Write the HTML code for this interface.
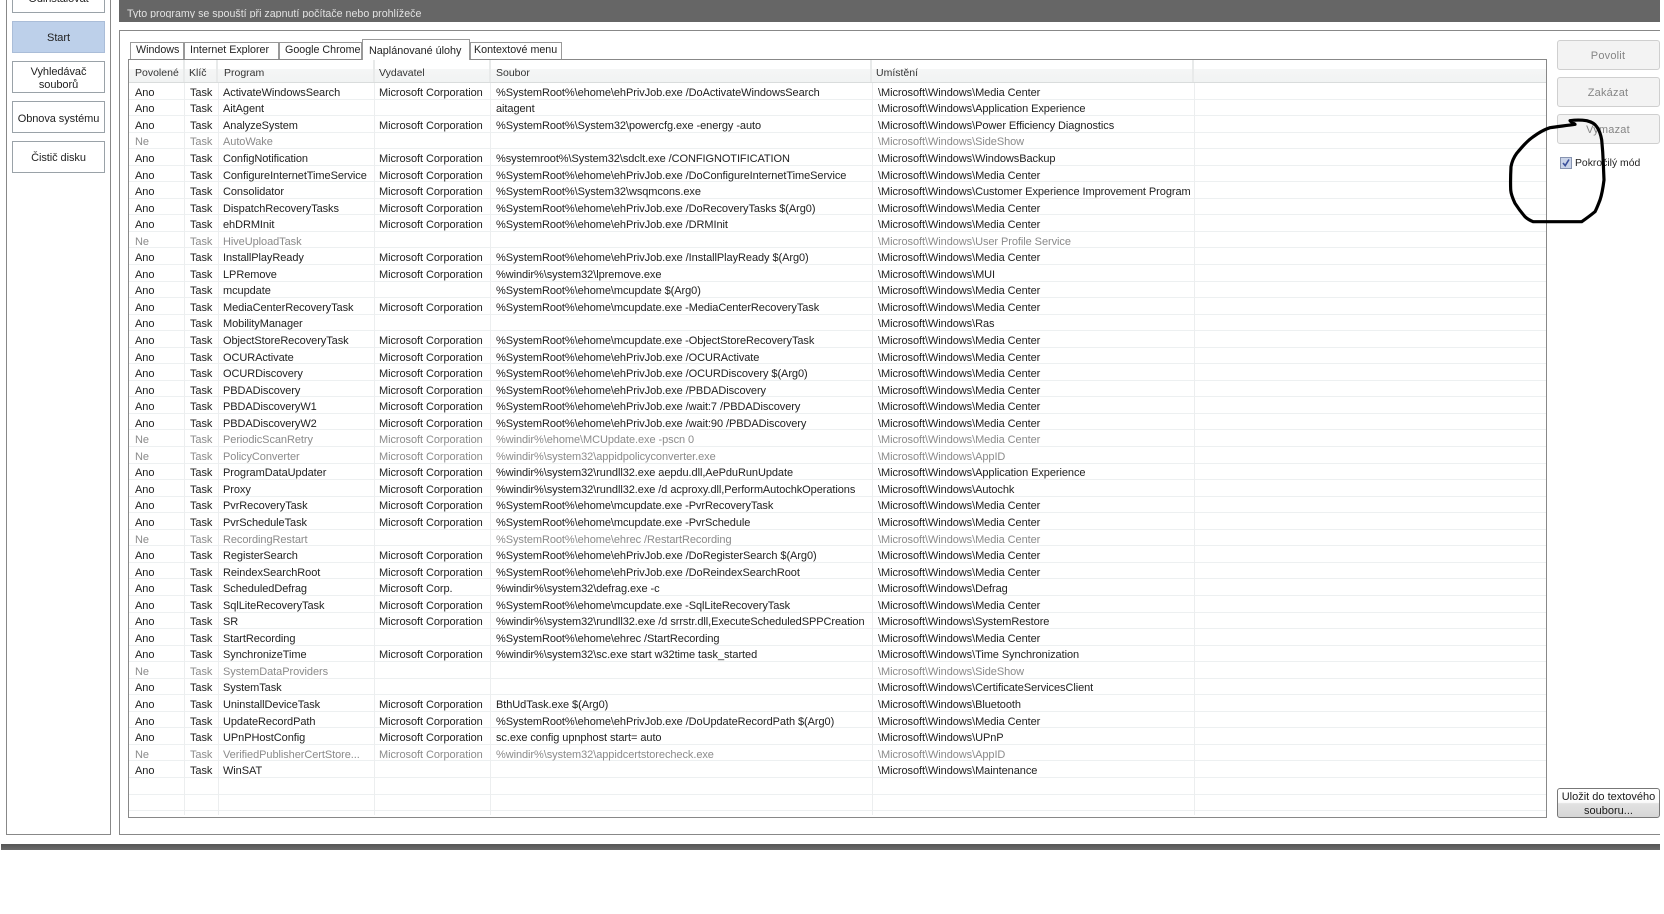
<!DOCTYPE html>
<html lang="cs"><head><meta charset="utf-8"><title>Start</title>
<style>
html,body{margin:0;padding:0;background:#fff;width:1664px;height:914px;overflow:hidden}
body{position:relative;font-family:"Liberation Sans",sans-serif;font-size:11px;letter-spacing:-.07px;color:#222}
.abs,.btn,.tab,.side,.line{position:absolute;box-sizing:border-box}
.side{left:12px;width:93px;border:1px solid #9aa2a8;background:#fff;text-align:center;display:flex;align-items:center;justify-content:center;line-height:13.5px;padding-top:4px}
.tab{top:42px;height:18px;border:1px solid #999;border-bottom:0;background:#fff;padding-left:5px;white-space:nowrap}
.tab div{height:12px;overflow:hidden;line-height:15px;font-size:10.7px;letter-spacing:0}
.tab.on{top:39px;height:21px;padding-left:6px;z-index:3}
.tab.on div{height:17px;overflow:visible;line-height:22px;font-size:10.8px}
.rows{position:absolute;left:129px;top:83px;width:1417px;height:733px;overflow:hidden;z-index:1}
.r{position:relative;height:16.56px;box-shadow:inset 0 -1px #edf0f1;line-height:16.2px;white-space:nowrap}
.r span{position:absolute;top:1.8px}
.r span:nth-child(1){left:6px}
.r span:nth-child(2){left:61px}
.r span:nth-child(3){left:94px}
.r span:nth-child(4){left:250px}
.r span:nth-child(5){left:367px}
.r span:nth-child(6){left:749px}
.n{color:#8b8b8b}
.col{position:absolute;top:83px;height:732px;width:1px;background:#eceeef;z-index:2}
.hs{position:absolute;top:60px;height:22px;width:2px;background:#e8eaea;z-index:2}
.h{position:absolute;top:66px;line-height:15px;z-index:3;color:#333;font-size:10.5px;letter-spacing:0}
.btn{left:1557px;width:103px;height:30px;border:1px solid #cfcfcf;border-radius:3px;background:#f3f3f3;color:#858585;text-align:center;line-height:30px;letter-spacing:.2px;padding-right:1px}
</style></head><body>

<div class="abs" style="left:6px;top:-5px;width:105px;height:840px;border:1px solid #888"></div>
<div class="side" style="top:-20px;height:33px;align-items:flex-end;padding-bottom:6px;padding-top:0">Odinstalovat</div>
<div class="side" style="top:21px;height:32px;background:#bdd0ea;border-color:#aabdd8">Start</div>
<div class="side" style="top:61px;height:32px">Vyhledávač<br>souborů</div>
<div class="side" style="top:101px;height:32px;padding-top:5px">Obnova systému</div>
<div class="side" style="top:141px;height:32px">Čistič disku</div>

<div class="abs" style="left:119px;top:0;width:1541px;height:22px;background:#666"></div>
<div class="abs" style="left:127px;top:7px;height:11px;overflow:hidden;color:#e2e2e2;line-height:14px;white-space:nowrap;font-size:10.66px;letter-spacing:0">Tyto programy se spouští při zapnutí počítače nebo prohlížeče</div>

<div class="abs" style="left:119px;top:30px;width:1541px;height:805px;border:1px solid #888;border-right:0"></div>

<div class="tab" style="left:130px;width:54px"><div>Windows</div></div>
<div class="tab" style="left:184px;width:95px"><div>Internet Explorer</div></div>
<div class="tab" style="left:279px;width:83px"><div>Google Chrome</div></div>
<div class="tab on" style="left:362px;width:108px"><div>Naplánované úlohy</div></div>
<div class="tab" style="left:470px;width:92px;padding-left:3px"><div>Kontextové menu</div></div>

<div class="abs" style="left:128px;top:59px;width:1419px;height:759px;border:1px solid #888;background:#fff"></div>
<div class="abs" style="left:129px;top:69px;width:1417px;height:14px;background:linear-gradient(#f5f6f6,#f1f3f3);border-bottom:1px solid #d9dcdc;box-sizing:border-box"></div>

<div class="hs" style="left:183px"></div><div class="hs" style="left:216px"></div><div class="hs" style="left:373px"></div><div class="hs" style="left:489px"></div><div class="hs" style="left:870px"></div><div class="hs" style="left:1192px"></div>
<div class="h" style="left:135px">Povolené</div>
<div class="h" style="left:189px">Klíč</div>
<div class="h" style="left:224px">Program</div>
<div class="h" style="left:379px">Vydavatel</div>
<div class="h" style="left:496px">Soubor</div>
<div class="h" style="left:876px">Umístění</div>

<div class="col" style="left:184px"></div><div class="col" style="left:218px"></div><div class="col" style="left:374px"></div><div class="col" style="left:490px"></div><div class="col" style="left:872px"></div><div class="col" style="left:1194px"></div>

<div class="rows">
<div class="r"><span>Ano</span><span>Task</span><span>ActivateWindowsSearch</span><span>Microsoft Corporation</span><span>%SystemRoot%\ehome\ehPrivJob.exe /DoActivateWindowsSearch</span><span>\Microsoft\Windows\Media Center</span></div>
<div class="r"><span>Ano</span><span>Task</span><span>AitAgent</span><span></span><span>aitagent</span><span>\Microsoft\Windows\Application Experience</span></div>
<div class="r"><span>Ano</span><span>Task</span><span>AnalyzeSystem</span><span>Microsoft Corporation</span><span>%SystemRoot%\System32\powercfg.exe -energy -auto</span><span>\Microsoft\Windows\Power Efficiency Diagnostics</span></div>
<div class="r n"><span>Ne</span><span>Task</span><span>AutoWake</span><span></span><span></span><span>\Microsoft\Windows\SideShow</span></div>
<div class="r"><span>Ano</span><span>Task</span><span>ConfigNotification</span><span>Microsoft Corporation</span><span>%systemroot%\System32\sdclt.exe /CONFIGNOTIFICATION</span><span>\Microsoft\Windows\WindowsBackup</span></div>
<div class="r"><span>Ano</span><span>Task</span><span>ConfigureInternetTimeService</span><span>Microsoft Corporation</span><span>%SystemRoot%\ehome\ehPrivJob.exe /DoConfigureInternetTimeService</span><span>\Microsoft\Windows\Media Center</span></div>
<div class="r"><span>Ano</span><span>Task</span><span>Consolidator</span><span>Microsoft Corporation</span><span>%SystemRoot%\System32\wsqmcons.exe</span><span>\Microsoft\Windows\Customer Experience Improvement Program</span></div>
<div class="r"><span>Ano</span><span>Task</span><span>DispatchRecoveryTasks</span><span>Microsoft Corporation</span><span>%SystemRoot%\ehome\ehPrivJob.exe /DoRecoveryTasks $(Arg0)</span><span>\Microsoft\Windows\Media Center</span></div>
<div class="r"><span>Ano</span><span>Task</span><span>ehDRMInit</span><span>Microsoft Corporation</span><span>%SystemRoot%\ehome\ehPrivJob.exe /DRMInit</span><span>\Microsoft\Windows\Media Center</span></div>
<div class="r n"><span>Ne</span><span>Task</span><span>HiveUploadTask</span><span></span><span></span><span>\Microsoft\Windows\User Profile Service</span></div>
<div class="r"><span>Ano</span><span>Task</span><span>InstallPlayReady</span><span>Microsoft Corporation</span><span>%SystemRoot%\ehome\ehPrivJob.exe /InstallPlayReady $(Arg0)</span><span>\Microsoft\Windows\Media Center</span></div>
<div class="r"><span>Ano</span><span>Task</span><span>LPRemove</span><span>Microsoft Corporation</span><span>%windir%\system32\lpremove.exe</span><span>\Microsoft\Windows\MUI</span></div>
<div class="r"><span>Ano</span><span>Task</span><span>mcupdate</span><span></span><span>%SystemRoot%\ehome\mcupdate $(Arg0)</span><span>\Microsoft\Windows\Media Center</span></div>
<div class="r"><span>Ano</span><span>Task</span><span>MediaCenterRecoveryTask</span><span>Microsoft Corporation</span><span>%SystemRoot%\ehome\mcupdate.exe -MediaCenterRecoveryTask</span><span>\Microsoft\Windows\Media Center</span></div>
<div class="r"><span>Ano</span><span>Task</span><span>MobilityManager</span><span></span><span></span><span>\Microsoft\Windows\Ras</span></div>
<div class="r"><span>Ano</span><span>Task</span><span>ObjectStoreRecoveryTask</span><span>Microsoft Corporation</span><span>%SystemRoot%\ehome\mcupdate.exe -ObjectStoreRecoveryTask</span><span>\Microsoft\Windows\Media Center</span></div>
<div class="r"><span>Ano</span><span>Task</span><span>OCURActivate</span><span>Microsoft Corporation</span><span>%SystemRoot%\ehome\ehPrivJob.exe /OCURActivate</span><span>\Microsoft\Windows\Media Center</span></div>
<div class="r"><span>Ano</span><span>Task</span><span>OCURDiscovery</span><span>Microsoft Corporation</span><span>%SystemRoot%\ehome\ehPrivJob.exe /OCURDiscovery $(Arg0)</span><span>\Microsoft\Windows\Media Center</span></div>
<div class="r"><span>Ano</span><span>Task</span><span>PBDADiscovery</span><span>Microsoft Corporation</span><span>%SystemRoot%\ehome\ehPrivJob.exe /PBDADiscovery</span><span>\Microsoft\Windows\Media Center</span></div>
<div class="r"><span>Ano</span><span>Task</span><span>PBDADiscoveryW1</span><span>Microsoft Corporation</span><span>%SystemRoot%\ehome\ehPrivJob.exe /wait:7 /PBDADiscovery</span><span>\Microsoft\Windows\Media Center</span></div>
<div class="r"><span>Ano</span><span>Task</span><span>PBDADiscoveryW2</span><span>Microsoft Corporation</span><span>%SystemRoot%\ehome\ehPrivJob.exe /wait:90 /PBDADiscovery</span><span>\Microsoft\Windows\Media Center</span></div>
<div class="r n"><span>Ne</span><span>Task</span><span>PeriodicScanRetry</span><span>Microsoft Corporation</span><span>%windir%\ehome\MCUpdate.exe -pscn 0</span><span>\Microsoft\Windows\Media Center</span></div>
<div class="r n"><span>Ne</span><span>Task</span><span>PolicyConverter</span><span>Microsoft Corporation</span><span>%windir%\system32\appidpolicyconverter.exe</span><span>\Microsoft\Windows\AppID</span></div>
<div class="r"><span>Ano</span><span>Task</span><span>ProgramDataUpdater</span><span>Microsoft Corporation</span><span>%windir%\system32\rundll32.exe aepdu.dll,AePduRunUpdate</span><span>\Microsoft\Windows\Application Experience</span></div>
<div class="r"><span>Ano</span><span>Task</span><span>Proxy</span><span>Microsoft Corporation</span><span>%windir%\system32\rundll32.exe /d acproxy.dll,PerformAutochkOperations</span><span>\Microsoft\Windows\Autochk</span></div>
<div class="r"><span>Ano</span><span>Task</span><span>PvrRecoveryTask</span><span>Microsoft Corporation</span><span>%SystemRoot%\ehome\mcupdate.exe -PvrRecoveryTask</span><span>\Microsoft\Windows\Media Center</span></div>
<div class="r"><span>Ano</span><span>Task</span><span>PvrScheduleTask</span><span>Microsoft Corporation</span><span>%SystemRoot%\ehome\mcupdate.exe -PvrSchedule</span><span>\Microsoft\Windows\Media Center</span></div>
<div class="r n"><span>Ne</span><span>Task</span><span>RecordingRestart</span><span></span><span>%SystemRoot%\ehome\ehrec /RestartRecording</span><span>\Microsoft\Windows\Media Center</span></div>
<div class="r"><span>Ano</span><span>Task</span><span>RegisterSearch</span><span>Microsoft Corporation</span><span>%SystemRoot%\ehome\ehPrivJob.exe /DoRegisterSearch $(Arg0)</span><span>\Microsoft\Windows\Media Center</span></div>
<div class="r"><span>Ano</span><span>Task</span><span>ReindexSearchRoot</span><span>Microsoft Corporation</span><span>%SystemRoot%\ehome\ehPrivJob.exe /DoReindexSearchRoot</span><span>\Microsoft\Windows\Media Center</span></div>
<div class="r"><span>Ano</span><span>Task</span><span>ScheduledDefrag</span><span>Microsoft Corp.</span><span>%windir%\system32\defrag.exe -c</span><span>\Microsoft\Windows\Defrag</span></div>
<div class="r"><span>Ano</span><span>Task</span><span>SqlLiteRecoveryTask</span><span>Microsoft Corporation</span><span>%SystemRoot%\ehome\mcupdate.exe -SqlLiteRecoveryTask</span><span>\Microsoft\Windows\Media Center</span></div>
<div class="r"><span>Ano</span><span>Task</span><span>SR</span><span>Microsoft Corporation</span><span>%windir%\system32\rundll32.exe /d srrstr.dll,ExecuteScheduledSPPCreation</span><span>\Microsoft\Windows\SystemRestore</span></div>
<div class="r"><span>Ano</span><span>Task</span><span>StartRecording</span><span></span><span>%SystemRoot%\ehome\ehrec /StartRecording</span><span>\Microsoft\Windows\Media Center</span></div>
<div class="r"><span>Ano</span><span>Task</span><span>SynchronizeTime</span><span>Microsoft Corporation</span><span>%windir%\system32\sc.exe start w32time task_started</span><span>\Microsoft\Windows\Time Synchronization</span></div>
<div class="r n"><span>Ne</span><span>Task</span><span>SystemDataProviders</span><span></span><span></span><span>\Microsoft\Windows\SideShow</span></div>
<div class="r"><span>Ano</span><span>Task</span><span>SystemTask</span><span></span><span></span><span>\Microsoft\Windows\CertificateServicesClient</span></div>
<div class="r"><span>Ano</span><span>Task</span><span>UninstallDeviceTask</span><span>Microsoft Corporation</span><span>BthUdTask.exe $(Arg0)</span><span>\Microsoft\Windows\Bluetooth</span></div>
<div class="r"><span>Ano</span><span>Task</span><span>UpdateRecordPath</span><span>Microsoft Corporation</span><span>%SystemRoot%\ehome\ehPrivJob.exe /DoUpdateRecordPath $(Arg0)</span><span>\Microsoft\Windows\Media Center</span></div>
<div class="r"><span>Ano</span><span>Task</span><span>UPnPHostConfig</span><span>Microsoft Corporation</span><span>sc.exe config upnphost start= auto</span><span>\Microsoft\Windows\UPnP</span></div>
<div class="r n"><span>Ne</span><span>Task</span><span>VerifiedPublisherCertStore...</span><span>Microsoft Corporation</span><span>%windir%\system32\appidcertstorecheck.exe</span><span>\Microsoft\Windows\AppID</span></div>
<div class="r"><span>Ano</span><span>Task</span><span>WinSAT</span><span></span><span></span><span>\Microsoft\Windows\Maintenance</span></div>
<div class="r"></div>
<div class="r"></div>
</div>

<div class="btn" style="top:40px">Povolit</div>
<div class="btn" style="top:77px">Zakázat</div>
<div class="btn" style="top:114px">Vymazat</div>

<svg class="abs" style="left:1560px;top:157px;z-index:4" width="12" height="12" viewBox="0 0 12 12"><rect x=".5" y=".5" width="11" height="11" fill="#c9d3e8" stroke="#8794b0"/><path d="M3 6l2.2 2.6L9 2.5" fill="none" stroke="#3a4f9a" stroke-width="1.6"/></svg>
<div class="abs" style="left:1575px;top:156px;line-height:15px;white-space:nowrap;z-index:4;font-size:10.4px;letter-spacing:0">Pokročilý mód</div>

<div class="abs" style="left:1557px;top:788px;width:103px;height:30px;box-sizing:border-box;border:1px solid #777;border-radius:3px;background:linear-gradient(#fff 0,#fbfbfb 48%,#e2e2e2 52%,#d6d6d6 100%);text-align:center;line-height:13.5px;padding-top:2px;letter-spacing:0;white-space:nowrap;color:#1a1a1a">Uložit do textového<br>souboru...</div>

<div class="abs" style="left:1px;top:844px;width:1659px;height:6px;background:linear-gradient(#555,#6b6b6b)"></div>

<svg class="abs" style="left:0;top:0;z-index:5;pointer-events:none" width="1664" height="914" viewBox="0 0 1664 914"><path d="M1575 124.3C1572 122.5 1570 121 1570 120.7C1576 119.8 1582 120 1586.7 120.7C1592 122 1595 124 1596.7 126.7C1600 131 1601 136 1601.7 140C1602.5 148 1603 155 1603.3 163.3L1604 180C1603 188 1602 194 1600 200C1598 205 1597 208 1595 211.7C1591 215 1587 218 1581.7 221.7L1533.3 221.7C1530 220.5 1527.5 219 1525 216.7C1521 212 1518 208 1515 203.3C1512.5 198 1511 194 1510.7 190C1510.4 182 1510.6 174 1511 166.7C1512 161 1514 157 1516.7 153.3C1522 147 1527 141 1533.3 136.7C1539 132.5 1544 129.5 1550 127.7C1558 126.5 1567 125.5 1575 124.3Z" fill="none" stroke="#000" stroke-width="3.2" stroke-linejoin="round"/></svg>

</body></html>
